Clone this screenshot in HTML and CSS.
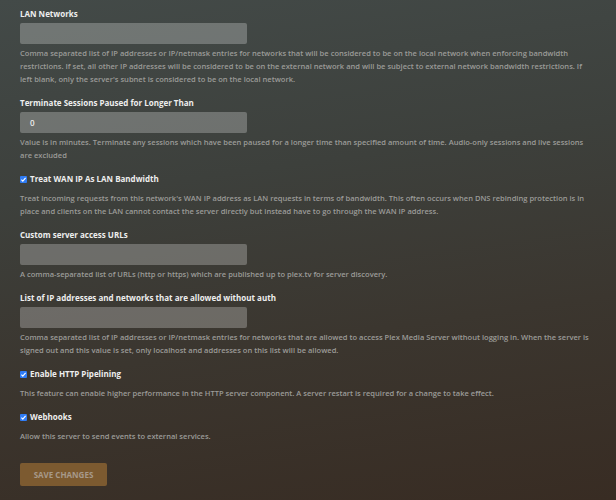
FILE: index.html
```html
<!DOCTYPE html>
<html>
<head>
<meta charset="utf-8">
<link rel="stylesheet" href="styles.css">
</head>
<body>
<div class="page">
  <form class="settings">
    <div class="group">
      <label class="label">LAN Networks</label>
      <div class="input"></div>
      <p class="desc">Comma separated list of IP addresses or IP/netmask entries for networks that will be considered to be on the local network when enforcing bandwidth<br>restrictions. If set, all other IP addresses will be considered to be on the external network and will be subject to external network bandwidth restrictions. If<br>left blank, only the server's subnet is considered to be on the local network.</p>
    </div>
    <div class="group">
      <label class="label">Terminate Sessions Paused for Longer Than</label>
      <div class="input">0</div>
      <p class="desc">Value is in minutes. Terminate any sessions which have been paused for a longer time than specified amount of time. Audio-only sessions and live sessions<br>are excluded</p>
    </div>
    <div class="group">
      <label class="check"><span class="box"><svg viewBox="0 0 8 8" width="8" height="8"><path d="M1.6 4.2 L3.2 5.8 L6.4 2.2" fill="none" stroke="#fff" stroke-width="1.3"/></svg></span>Treat WAN IP As LAN Bandwidth</label>
      <p class="desc">Treat incoming requests from this network's WAN IP address as LAN requests in terms of bandwidth. This often occurs when DNS rebinding protection is in<br>place and clients on the LAN cannot contact the server directly but instead have to go through the WAN IP address.</p>
    </div>
    <div class="group">
      <label class="label">Custom server access URLs</label>
      <div class="input"></div>
      <p class="desc">A comma-separated list of URLs (http or https) which are published up to plex.tv for server discovery.</p>
    </div>
    <div class="group">
      <label class="label">List of IP addresses and networks that are allowed without auth</label>
      <div class="input"></div>
      <p class="desc">Comma separated list of IP addresses or IP/netmask entries for networks that are allowed to access Plex Media Server without logging in. When the server is<br>signed out and this value is set, only localhost and addresses on this list will be allowed.</p>
    </div>
    <div class="group">
      <label class="check"><span class="box"><svg viewBox="0 0 8 8" width="8" height="8"><path d="M1.6 4.2 L3.2 5.8 L6.4 2.2" fill="none" stroke="#fff" stroke-width="1.3"/></svg></span>Enable HTTP Pipelining</label>
      <p class="desc">This feature can enable higher performance in the HTTP server component. A server restart is required for a change to take effect.</p>
    </div>
    <div class="group">
      <label class="check"><span class="box"><svg viewBox="0 0 8 8" width="8" height="8"><path d="M1.6 4.2 L3.2 5.8 L6.4 2.2" fill="none" stroke="#fff" stroke-width="1.3"/></svg></span>Webhooks</label>
      <p class="desc">Allow this server to send events to external services.</p>
    </div>
    <div class="actions">
      <button type="button" class="save">SAVE CHANGES</button>
    </div>
  </form>
</div>
</body>
</html>
```
FILE: styles.css
```css
html, body {
  margin: 0;
  padding: 0;
  height: 100%;
}
body {
  font-family: "Open Sans", "Noto Sans", sans-serif;
  background: linear-gradient(172deg, #434a48 0%, #3d403c 35%, #3b362f 65%, #382c23 100%);
  overflow: hidden;
}
.page {
  padding: 8px 0 0 20px;
}
.settings {
  width: 596px;
  display: flex;
  flex-direction: column;
}
.group {
  display: flex;
  flex-direction: column;
  margin-bottom: 11px;
}
.label {
  font-size: 8px;
  font-weight: 700;
  color: #eeeeee;
  line-height: 12px;
  margin-bottom: 3px;
}
.input {
  width: 227px;
  height: 21px;
  box-sizing: border-box;
  background: rgba(255,255,255,0.25);
  border-radius: 2px;
  color: #eee;
  font-size: 8px;
  font-weight: 600;
  line-height: 21px;
  padding-left: 10px;
}
.desc {
  margin: 3px 0 0 0;
  font-size: 7.55px;
  font-weight: 600;
  line-height: 13px;
  color: #9b9b98;
  white-space: nowrap;
}
.check {
  display: flex;
  align-items: center;
  font-size: 8px;
  font-weight: 700;
  color: #eeeeee;
  line-height: 12px;
  margin-bottom: 4px;
}
.box {
  width: 7px;
  height: 7px;
  background: #2f7cf6;
  border-radius: 1px;
  margin-right: 3px;
  display: inline-flex;
  align-items: center;
  justify-content: center;
  overflow: hidden;
}
.box svg {
  width: 7px;
  height: 7px;
}
.actions {
  margin-top: 7px;
}
.save {
  width: 87px;
  height: 23px;
  border: none;
  border-radius: 2px;
  background: #7c5a30;
  color: #a7998a;
  font-family: "Open Sans", sans-serif;
  font-size: 8px;
  font-weight: 700;
  padding: 0;
}
```
